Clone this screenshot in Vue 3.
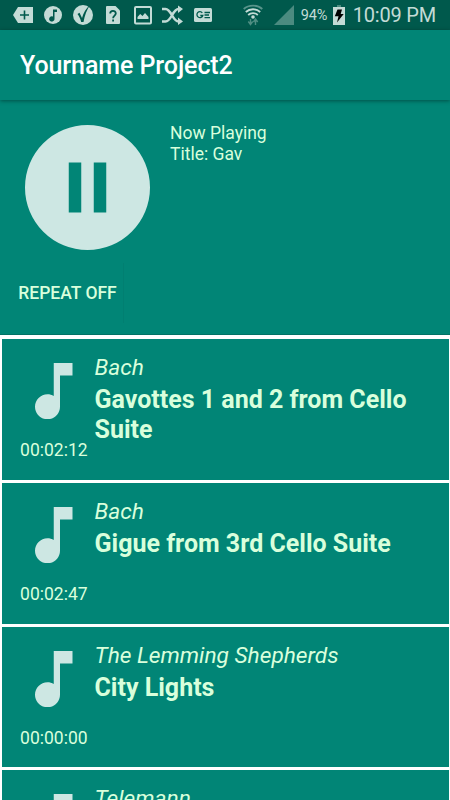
<template>
  <div class="screen">
    <div class="status-bar">
      <div class="notifications">
        <svg viewBox="0 0 30 30">
          <path d="M5 15l5-8h15v16H10z" fill="#c3dbd6" />
          <path d="M16.500 10.500v9M12 15h9" stroke="#00594c" stroke-width="1.600" />
        </svg>
        <svg viewBox="0 0 30 30">
          <circle cx="15" cy="15" r="9" fill="#c3dbd6" />
          <path d="M15 9.500v7a2.700 2.700 0 1 0 1.500 2.200V12H19V9.500z" fill="#00594c" />
        </svg>
        <svg viewBox="0 0 30 30">
          <circle cx="15" cy="15" r="10" fill="#c3dbd6" />
          <path d="M9.500 14l2-1.200 2.500 5.200C15.500 12.500 18 8.500 22 5c-3.200 5-5.300 10.200-6.500 17h-2.300C12.500 19 11.200 16.300 9.500 14z" fill="#00594c" />
        </svg>
        <svg viewBox="0 0 30 30">
          <path d="M9 6h8.500l4.500 4.500V23a1 1 0 0 1-1 1H9a1 1 0 0 1-1-1V7a1 1 0 0 1 1-1z" fill="#c3dbd6" />
          <path d="M12.200 13.500c0-3.500 5.600-3.500 5.600 0 0 2-2.700 2.200-2.700 4.700M15.100 19.500v2" fill="none" stroke="#00594c" stroke-width="1.800" />
        </svg>
        <svg viewBox="0 0 30 30">
          <rect x="7" y="7" width="16" height="16.500" rx="1" fill="none" stroke="#c3dbd6" stroke-width="2" />
          <path d="M9.500 19v-2l2.700-3 2.300 2 2.500-3 3.500 4v2z" fill="#c3dbd6" />
        </svg>
        <svg viewBox="0 0 30 30">
          <path d="M4 9h3.500c6 0 7 12.500 13 12.500H22M4 21.500h3.500c6 0 7-12.500 13-12.500H22" fill="none" stroke="#c3dbd6" stroke-width="2.500" />
          <path d="M20 5.500l5 3.500-5 4zM20 17.500l5 4-5 3.500z" fill="#c3dbd6" />
        </svg>
        <svg viewBox="0 0 30 30">
          <rect x="6" y="8" width="18" height="14" rx="1.500" fill="#c3dbd6" />
          <path d="M14.300 12.800a3 3 0 1 0 .5 2.700h-2.500M16.500 12.500H22M16.500 15H21M16.500 17.700H22" fill="none" stroke="#00594c" stroke-width="1.300" />
        </svg>
      </div>
      <div class="system">
        <svg class="wifi" viewBox="0 0 20 22">
          <g fill="none" stroke="#c3dbd6" stroke-width="1.800">
            <path d="M.7 5c5-4.500 13.600-4.500 18.600 0" opacity=".45" />
            <path d="M2.800 8c4-3.700 10.400-3.700 14.400 0M5.200 11c2.700-2.500 6.900-2.500 9.600 0" />
          </g>
          <circle cx="10" cy="13" r="1.800" fill="#c3dbd6" />
          <path d="M7.500 15v5M5.300 17.500l2.200 3 2.200-3M12.500 21v-5M10.500 18l2-3 2.200 3" fill="none" stroke="#4f8e83" stroke-width="1.400" />
        </svg>
        <svg class="signal" viewBox="0 0 20 20"><path d="M20 0v20H0z" fill="#4b8b80" /></svg>
        <span class="percent">94%</span>
        <svg class="battery" viewBox="0 0 12 20">
          <path d="M4 0h4v2H4z" fill="#4b8b80" />
          <path d="M0 2h12v18H0z" fill="#c3dbd6" />
          <path d="M4.500 4.500H9L7.700 9h3L4 17.500l1.500-6.300H1.800z" fill="#000" />
        </svg>
        <span class="clock">10:09 PM</span>
      </div>
    </div>

    <header class="app-bar">
      <h1>Yourname Project2</h1>
    </header>

    <section class="player">
      <div class="now-playing">
        <button class="pause" aria-label="Pause" @click="playing = !playing">
          <svg viewBox="0 0 20 20">
            <path d="M10 0a10 10 0 1 0 0 20 10 10 0 0 0 0-20zM9 14H7V6h2zm4 0h-2V6h2z" fill="#cde7e3" />
          </svg>
        </button>
        <div class="info">
          <div>Now Playing</div>
          <div>Title: Gav</div>
        </div>
      </div>
      <button class="repeat">REPEAT OFF</button>
    </section>

    <ul class="songs">
      <li v-for="song in songs" :key="song.title" class="song">
        <div class="side">
          <svg class="note" viewBox="6 3 12 18">
            <path d="M12 3v10.550c-.59-.34-1.270-.55-2-.55-2.210 0-4 1.790-4 4s1.790 4 4 4 4-1.790 4-4V7h4V3z" fill="#cde7e3" />
          </svg>
          <span class="time">{{ song.time }}</span>
        </div>
        <div class="details">
          <div class="artist">{{ song.artist }}</div>
          <div class="title">{{ song.title }}</div>
        </div>
      </li>
    </ul>
  </div>
</template>

<script setup>
import { ref } from 'vue';

const playing = ref(true);

const songs = [
  { artist: 'Bach', title: 'Gavottes 1 and 2 from Cello Suite', time: '00:02:12' },
  { artist: 'Bach', title: 'Gigue from 3rd Cello Suite', time: '00:02:47' },
  { artist: 'The Lemming Shepherds', title: 'City Lights', time: '00:00:00' },
  { artist: 'Telemann', title: '', time: '' }
];
</script>

<style>
body {
  margin: 0;
  overflow: hidden;
}
</style>

<style scoped>
.screen {
  display: flex;
  flex-direction: column;
  width: 450px;
  height: 800px;
  overflow: hidden;
  background: #fff;
  color: #d9ffdc;
  font-family: Roboto, sans-serif;
  font-size: 17.5px;
}

.status-bar {
  display: flex;
  justify-content: space-between;
  flex: none;
  height: 30px;
  padding: 0 13px 0 8px;
  background: #00594c;
  color: #c3dbd6;
}

.notifications {
  display: flex;
}

.notifications svg {
  width: 30px;
  height: 30px;
}

.system {
  display: flex;
  align-items: center;
}

.wifi {
  width: 20px;
  height: 22px;
  margin-right: 11px;
}

.signal {
  width: 20px;
  height: 20px;
  margin-right: 7px;
}

.percent {
  width: 27px;
  margin-right: 5px;
  padding-top: 1px;
  font-size: 14.5px;
  letter-spacing: -0.1px;
  white-space: nowrap;
}

.battery {
  width: 12px;
  height: 20px;
  margin-right: 8px;
}

.clock {
  margin-right: 1px;
  font-size: 20px;
  letter-spacing: -0.2px;
  white-space: nowrap;
}

.app-bar {
  z-index: 1;
  display: flex;
  align-items: center;
  flex: none;
  box-sizing: border-box;
  height: 70px;
  padding: 1px 0 0 20px;
  background: #018576;
  box-shadow: 0 1px 4px rgba(0, 0, 0, 0.4);
}

h1 {
  margin: 0;
  color: #fff;
  font-size: 25px;
  font-weight: 500;
  letter-spacing: -0.08px;
}

button {
  border: 0;
  padding: 0;
  background: none;
  color: inherit;
  font: inherit;
}

.player {
  flex: none;
  box-sizing: border-box;
  height: 235px;
  padding-top: 25px;
  border-bottom: 1px solid #017265;
  background: #018576;
}

.now-playing {
  display: flex;
  gap: 20px;
  padding-left: 25px;
}

.pause,
.pause svg {
  display: block;
  width: 125px;
  height: 125px;
}

.info {
  margin-top: -2px;
  line-height: 20.5px;
}

.repeat {
  width: 124px;
  height: 60px;
  margin-top: 13px;
  padding: 0 0 0 12px;
  border-right: 1px solid #017f71;
  font-weight: 500;
  white-space: nowrap;
}

.songs {
  display: flex;
  flex-direction: column;
  gap: 3px;
  margin: 0;
  padding: 4px 1.5px 0;
  list-style: none;
}

.song {
  display: flex;
  flex: none;
  box-sizing: border-box;
  height: 140.8px;
  padding: 15px 18px 0;
  background: #018576;
}

.side {
  display: flex;
  flex-direction: column;
  width: 75px;
}

.note {
  width: 37.5px;
  height: 56.25px;
  margin: 9px 0 21px 15.5px;
}

.time {
  padding-left: 0.6px;
  line-height: 21px;
}

.details {
  flex: 1;
}

.artist {
  font-size: 22.7px;
  font-style: italic;
  line-height: 28px;
}

.title {
  margin-top: 3.4px;
  font-size: 25px;
  font-weight: 700;
  line-height: 29.5px;
}
</style>
